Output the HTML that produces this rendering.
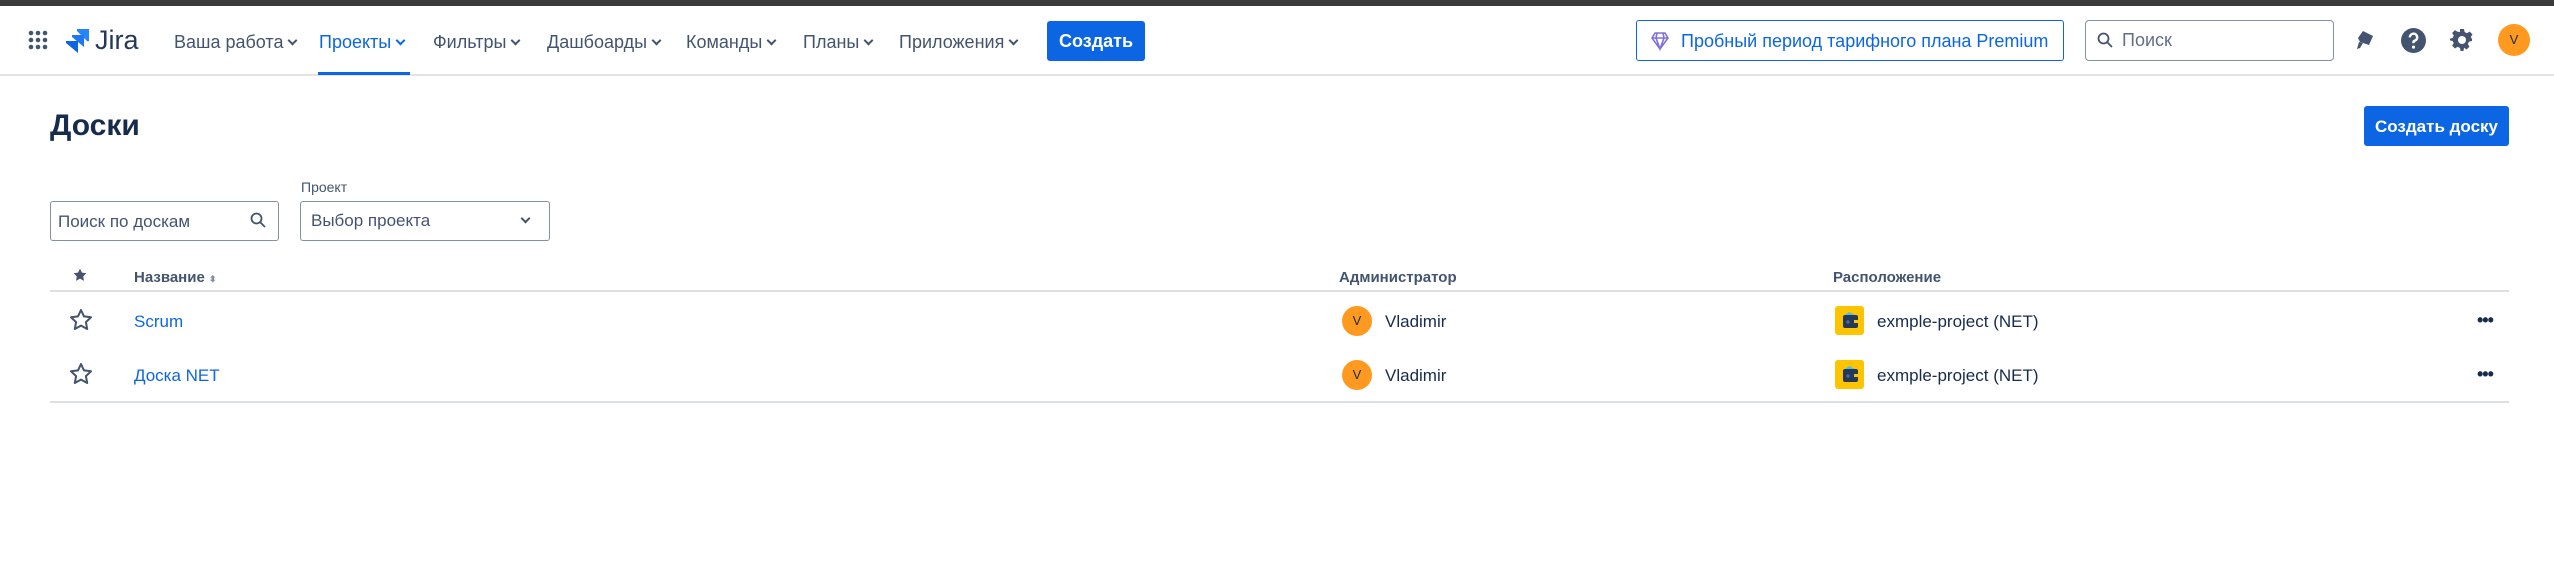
<!DOCTYPE html>
<html><head><meta charset="utf-8"><style>
*{box-sizing:border-box;margin:0;padding:0}
body{width:2554px;height:587px;background:#fff;font-family:"Liberation Sans","Noto Sans CJK SC",sans-serif;color:#172b4d;position:relative;overflow:hidden}
.a{position:absolute;white-space:nowrap}
.nav{font-size:18px;color:#44546f;top:32px}
.chev{display:inline-block;width:7px;height:7px;border-right:2px solid currentColor;border-bottom:2px solid currentColor;transform:rotate(45deg);margin-left:6px;position:relative;top:-4px}
.th{font-size:15px;font-weight:bold;color:#44546f;top:269px}
.row{font-size:17px}
.av{width:30px;height:30px;border-radius:50%;background:#ff991f;color:#172b4d;font-size:13px;text-align:center;line-height:30px}
.pi{width:29px;height:29px;background:#ffc400;border-radius:3px}
</style></head><body>
<div class="a" style="left:0;top:0;width:2554px;height:6px;background:#3b3b3b"></div>
<div class="a" style="left:0;top:74px;width:2554px;height:2px;background:#e2e3e6"></div>
<svg class="a" style="left:28px;top:30px" width="20" height="20" viewBox="0 0 20 20" fill="#44546f">
<circle cx="3" cy="3" r="2.3"/><circle cx="10" cy="3" r="2.3"/><circle cx="17" cy="3" r="2.3"/>
<circle cx="3" cy="10" r="2.3"/><circle cx="10" cy="10" r="2.3"/><circle cx="17" cy="10" r="2.3"/>
<circle cx="3" cy="17" r="2.3"/><circle cx="10" cy="17" r="2.3"/><circle cx="17" cy="17" r="2.3"/></svg>
<svg class="a" style="left:64px;top:28px" width="26" height="26" viewBox="0 0 26 26">
<path d="M13 1h12v12a2 2 0 0 1-2-0L13 3z" fill="#2684ff"/>
<path d="M8 7h12v12L8 9z" fill="#1f78f0"/>
<path d="M2 13h12v12L2 15z" fill="#0c66e4"/></svg>
<div class="a" style="left:95px;top:25px;font-size:27px;color:#253858">Jira</div>
<div class="a nav" style="left:174px">Ваша работа<span class="chev"></span></div>
<div class="a nav" style="left:319px;color:#0c66e4">Проекты<span class="chev"></span></div>
<div class="a" style="left:318px;top:72px;width:92px;height:3px;background:#0c66e4"></div>
<div class="a nav" style="left:433px">Фильтры<span class="chev"></span></div>
<div class="a nav" style="left:547px">Дашбоарды<span class="chev"></span></div>
<div class="a nav" style="left:686px">Команды<span class="chev"></span></div>
<div class="a nav" style="left:803px">Планы<span class="chev"></span></div>
<div class="a nav" style="left:899px">Приложения<span class="chev"></span></div>
<div class="a" style="left:1047px;top:21px;width:98px;height:40px;background:#0c66e4;border-radius:3px;color:#fff;font-size:18px;font-weight:bold;text-align:center;line-height:41px">Создать</div>
<div class="a" style="left:1636px;top:20px;width:428px;height:41px;border:1.5px solid #0c66e4;border-radius:3px"></div>
<svg class="a" style="left:1651px;top:31px" width="18" height="20" viewBox="0 0 18 20"><path d="M4 2h10l3 5-8 11L1 7z M1 7h16 M6 2l-1 5 4 11 4-11-1-5" fill="none" stroke="#8270db" stroke-width="1.6"/></svg>
<div class="a" style="left:1681px;top:31px;font-size:18px;color:#0c66e4">Пробный период тарифного плана Premium</div>
<div class="a" style="left:2085px;top:20px;width:249px;height:41px;border:1.5px solid #8590a2;border-radius:4px"></div>
<svg class="a" style="left:2097px;top:32px" width="16" height="16" viewBox="0 0 16 16"><circle cx="6.5" cy="6.5" r="5" fill="none" stroke="#44546f" stroke-width="1.8"/><path d="M10 10l5 5" stroke="#44546f" stroke-width="1.8"/></svg>
<div class="a" style="left:2122px;top:30px;font-size:18px;color:#626f86">Поиск</div>
<svg class="a" style="left:2354px;top:29px" width="22" height="24" viewBox="0 0 22 24"><path d="M9 2l10 5-4 9-9-3-2-4z" fill="#44546f"/><path d="M5 13l-2 7 3-1 3-5z" fill="#44546f"/></svg>
<svg class="a" style="left:2401px;top:28px" width="25" height="25" viewBox="0 0 24 24"><circle cx="12" cy="12" r="12" fill="#44546f"/><path d="M8.5 9a3.5 3.5 0 1 1 4.5 3.3c-.7.3-1 .8-1 1.5v.7" stroke="#fff" stroke-width="2.4" fill="none"/><circle cx="12" cy="18.3" r="1.5" fill="#fff"/></svg>
<svg class="a" style="left:2450px;top:28px" width="24" height="24" viewBox="0 0 24 24"><path d="M10 1h4l.6 3 2.4 1.2 2.6-1.7 2.9 2.9-1.7 2.6L22 11v2l-3 .6-1.2 2.4 1.7 2.6-2.9 2.9-2.6-1.7L14 20l-.6 3h-2.8L10 20l-2.4-1.2-2.6 1.7-2.9-2.9 1.7-2.6L2.6 13 0 12.4V10.6L2.6 10l1.2-2.4-1.7-2.6L5 2.1l2.6 1.7L10 4z" fill="#44546f"/><circle cx="12" cy="12" r="4" fill="#fff"/></svg>
<div class="a av" style="left:2498px;top:24px;width:32px;height:32px;line-height:32px">V</div>

<div class="a" style="left:50px;top:109px;font-size:30px;font-weight:bold;color:#172b4d">Доски</div>
<div class="a" style="left:2364px;top:106px;width:145px;height:40px;background:#0c66e4;border-radius:3px;color:#fff;font-size:17px;font-weight:bold;text-align:center;line-height:41px">Создать доску</div>
<div class="a" style="left:301px;top:179px;font-size:14px;color:#44546f">Проект</div>
<div class="a" style="left:50px;top:201px;width:229px;height:40px;border:1.5px solid #8590a2;border-radius:3px"></div>
<div class="a" style="left:58px;top:212px;font-size:17px;color:#44546f">Поиск по доскам</div>
<svg class="a" style="left:250px;top:212px" width="16" height="16" viewBox="0 0 16 16"><circle cx="6.5" cy="6.5" r="5" fill="none" stroke="#44546f" stroke-width="1.8"/><path d="M10 10l5 5" stroke="#44546f" stroke-width="1.8"/></svg>
<div class="a" style="left:300px;top:201px;width:250px;height:40px;border:1.5px solid #8590a2;border-radius:3px"></div>
<div class="a" style="left:311px;top:211px;font-size:17px;color:#44546f">Выбор проекта</div>
<div class="a" style="left:522px;top:215px;width:7px;height:7px;border-right:2px solid #44546f;border-bottom:2px solid #44546f;transform:rotate(45deg)"></div>

<svg class="a" style="left:73px;top:268px" width="14" height="14" viewBox="0 0 24 24"><path d="M12 1l3.4 7 7.6 1-5.5 5.3 1.3 7.7L12 18.3 5.2 22l1.3-7.7L1 9l7.6-1z" fill="#44546f"/></svg>
<div class="a th" style="left:134px">Название <span style="font-size:9px;color:#8590a2">⬍</span></div>
<div class="a th" style="left:1339px">Администратор</div>
<div class="a th" style="left:1833px">Расположение</div>
<div class="a" style="left:50px;top:290px;width:2459px;height:2px;background:#dcdfe4"></div>
<div class="a" style="left:50px;top:401px;width:2459px;height:2px;background:#dcdfe4"></div>

<svg class="a" style="left:69px;top:308px" width="24" height="24" viewBox="0 0 24 24"><path d="M12 2l3 6.4 7 .9-5.1 4.8 1.3 6.9L12 17.6 5.8 21l1.3-6.9L2 9.3l7-.9z" fill="none" stroke="#44546f" stroke-width="2" stroke-linejoin="round"/></svg>
<svg class="a" style="left:69px;top:362px" width="24" height="24" viewBox="0 0 24 24"><path d="M12 2l3 6.4 7 .9-5.1 4.8 1.3 6.9L12 17.6 5.8 21l1.3-6.9L2 9.3l7-.9z" fill="none" stroke="#44546f" stroke-width="2" stroke-linejoin="round"/></svg>
<div class="a row" style="left:134px;top:312px;color:#0c66e4">Scrum</div>
<div class="a row" style="left:134px;top:366px;color:#0c66e4">Доска NET</div>
<div class="a av" style="left:1342px;top:306px">V</div>
<div class="a av" style="left:1342px;top:360px">V</div>
<div class="a row" style="left:1385px;top:312px">Vladimir</div>
<div class="a row" style="left:1385px;top:366px">Vladimir</div>
<div class="a pi" style="left:1835px;top:306px"><svg width="29" height="29" viewBox="0 0 29 29"><rect x="8" y="9" width="15" height="13" rx="2" fill="#253858"/><path d="M10 9l4-3 4 2 2 1z" fill="#4bc1e8"/><circle cx="13" cy="16" r="1.6" fill="#4a6fa5"/><rect x="19" y="14" width="4" height="3" fill="#ffc400"/></svg></div>
<div class="a pi" style="left:1835px;top:360px"><svg width="29" height="29" viewBox="0 0 29 29"><rect x="8" y="9" width="15" height="13" rx="2" fill="#253858"/><path d="M10 9l4-3 4 2 2 1z" fill="#4bc1e8"/><circle cx="13" cy="16" r="1.6" fill="#4a6fa5"/><rect x="19" y="14" width="4" height="3" fill="#ffc400"/></svg></div>
<div class="a row" style="left:1877px;top:312px">exmple-project (NET)</div>
<div class="a row" style="left:1877px;top:366px">exmple-project (NET)</div>
<div class="a" style="left:2477px;top:310px;font-size:18px;font-weight:bold;color:#172b4d;letter-spacing:-1px">•••</div>
<div class="a" style="left:2477px;top:364px;font-size:18px;font-weight:bold;color:#172b4d;letter-spacing:-1px">•••</div>
</body></html>
